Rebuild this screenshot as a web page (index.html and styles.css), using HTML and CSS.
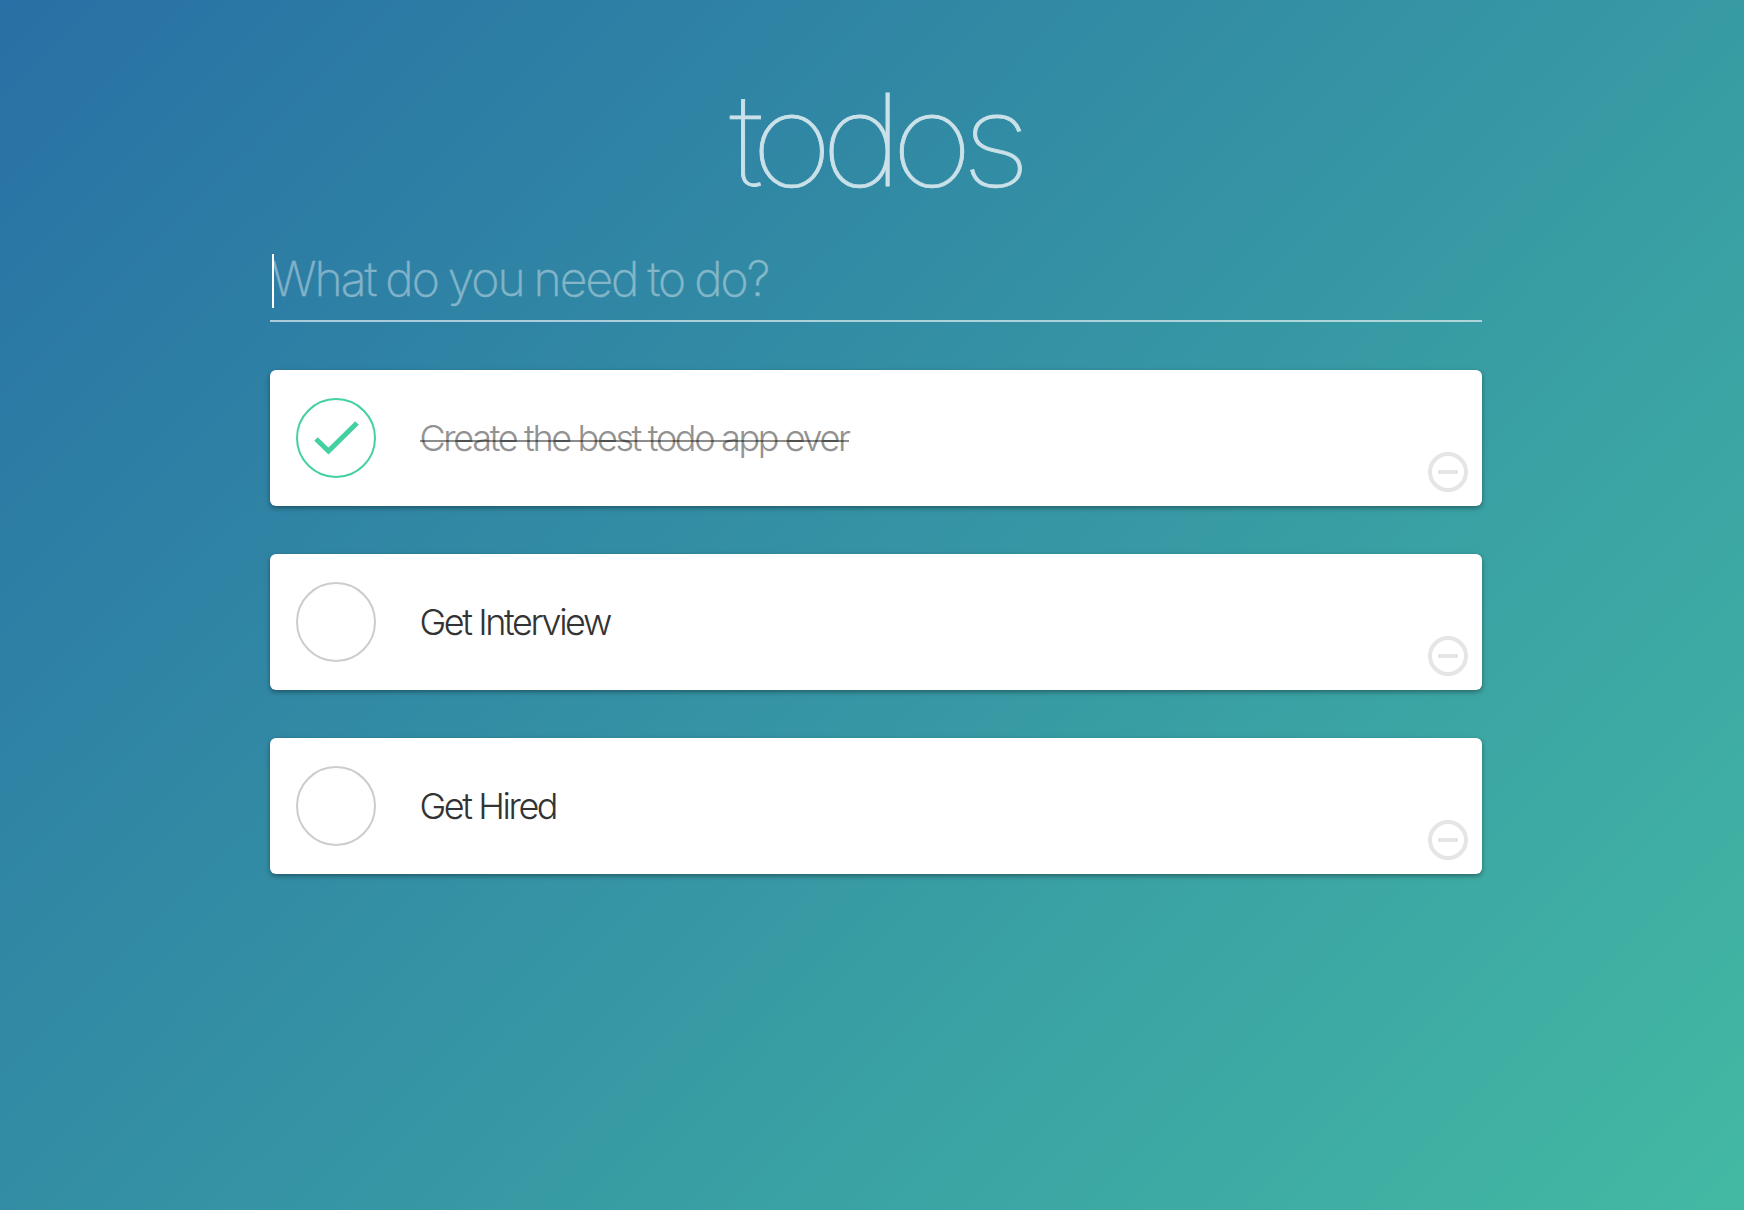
FILE: index.html
```html
<!DOCTYPE html>
<html lang="en">
<head>
<meta charset="utf-8">
<title>todos</title>
<link rel="stylesheet" href="styles.css">
</head>
<body>
<main class="app">
  <h1 class="title">todos</h1>
  <div class="entry"><span class="caret"></span><span class="placeholder">What do you need to do?</span></div>
  <ul class="list">
    <li class="card done">
      <svg class="toggle" viewBox="0 0 80 80"><circle cx="40" cy="40" r="39"/><path d="M20 41L32.500 53L61 25"/></svg>
      <span class="label">Create the best todo app ever</span>
      <svg class="remove" viewBox="0 0 40 40"><circle cx="20" cy="20" r="18"/><path d="M10 20H30"/></svg>
    </li>
    <li class="card">
      <svg class="toggle" viewBox="0 0 80 80"><circle cx="40" cy="40" r="39"/></svg>
      <span class="label">Get Interview</span>
      <svg class="remove" viewBox="0 0 40 40"><circle cx="20" cy="20" r="18"/><path d="M10 20H30"/></svg>
    </li>
    <li class="card">
      <svg class="toggle" viewBox="0 0 80 80"><circle cx="40" cy="40" r="39"/></svg>
      <span class="label">Get Hired</span>
      <svg class="remove" viewBox="0 0 40 40"><circle cx="20" cy="20" r="18"/><path d="M10 20H30"/></svg>
    </li>
  </ul>
</main>
</body>
</html>
```
FILE: styles.css
```css
* { box-sizing: border-box; }
body {
  margin: 0;
  height: 1210px;
  overflow: hidden;
  background: linear-gradient(135deg, #2870a5 0%, #3594a4 50%, #43b9a3 100%);
  font-family: Inter, "Liberation Sans", sans-serif;
}
.app { width: 1212px; margin-left: 270px; padding-top: 64px; }
.title {
  margin: 0;
  height: 180px;
  line-height: 152px;
  text-align: center;
  text-indent: -3px;
  font-size: 128px;
  font-weight: 100;
  letter-spacing: -10.500px;
  transform: scaleX(1.1);
  color: #cbe1e9;
  -webkit-text-stroke: .8px #cbe1e9;
}
.entry {
  display: flex;
  align-items: center;
  height: 78px;
  padding: 0 0 8px 2px;
  border-bottom: 2px solid rgba(255, 255, 255, .6);
}
.caret { width: 2px; height: 54px; margin-top: 6px; background: #fff; }
.placeholder {
  margin-left: -3px;
  font-size: 48px;
  font-weight: 200;
  letter-spacing: -2px;
  word-spacing: -1.500px;
  color: #fff;
  opacity: .4;
  -webkit-text-stroke: .4px #fff;
  white-space: nowrap;
}
.list { margin: 48px 0 0; padding: 0; list-style: none; display: grid; gap: 48px; }
.card {
  display: flex;
  align-items: center;
  height: 136px;
  padding: 0 14px 0 26px;
  background: #fff;
  border-radius: 6px;
  box-shadow: 0 2px 5px rgba(0, 0, 0, .38);
}
.toggle { width: 80px; height: 80px; fill: none; stroke: #ccc; stroke-width: 2; }
.done .toggle { stroke: #43d1a0; }
.toggle path { stroke-width: 5; }
.label {
  position: relative;
  margin-left: 43.500px;
  font-size: 36px;
  font-weight: 300;
  letter-spacing: -2.430px;
  color: #333;
  white-space: nowrap;
}
.done .label { color: #929292; letter-spacing: -2.350px; }
.done .label::after {
  content: "";
  position: absolute;
  left: 0;
  right: 0;
  top: 24px;
  height: 2px;
  background: rgba(0, 0, 0, .45);
}
.remove {
  width: 40px;
  height: 40px;
  margin: 68px 0 0 auto;
  fill: none;
  stroke: #e5e5e5;
  stroke-width: 4;
}
```
